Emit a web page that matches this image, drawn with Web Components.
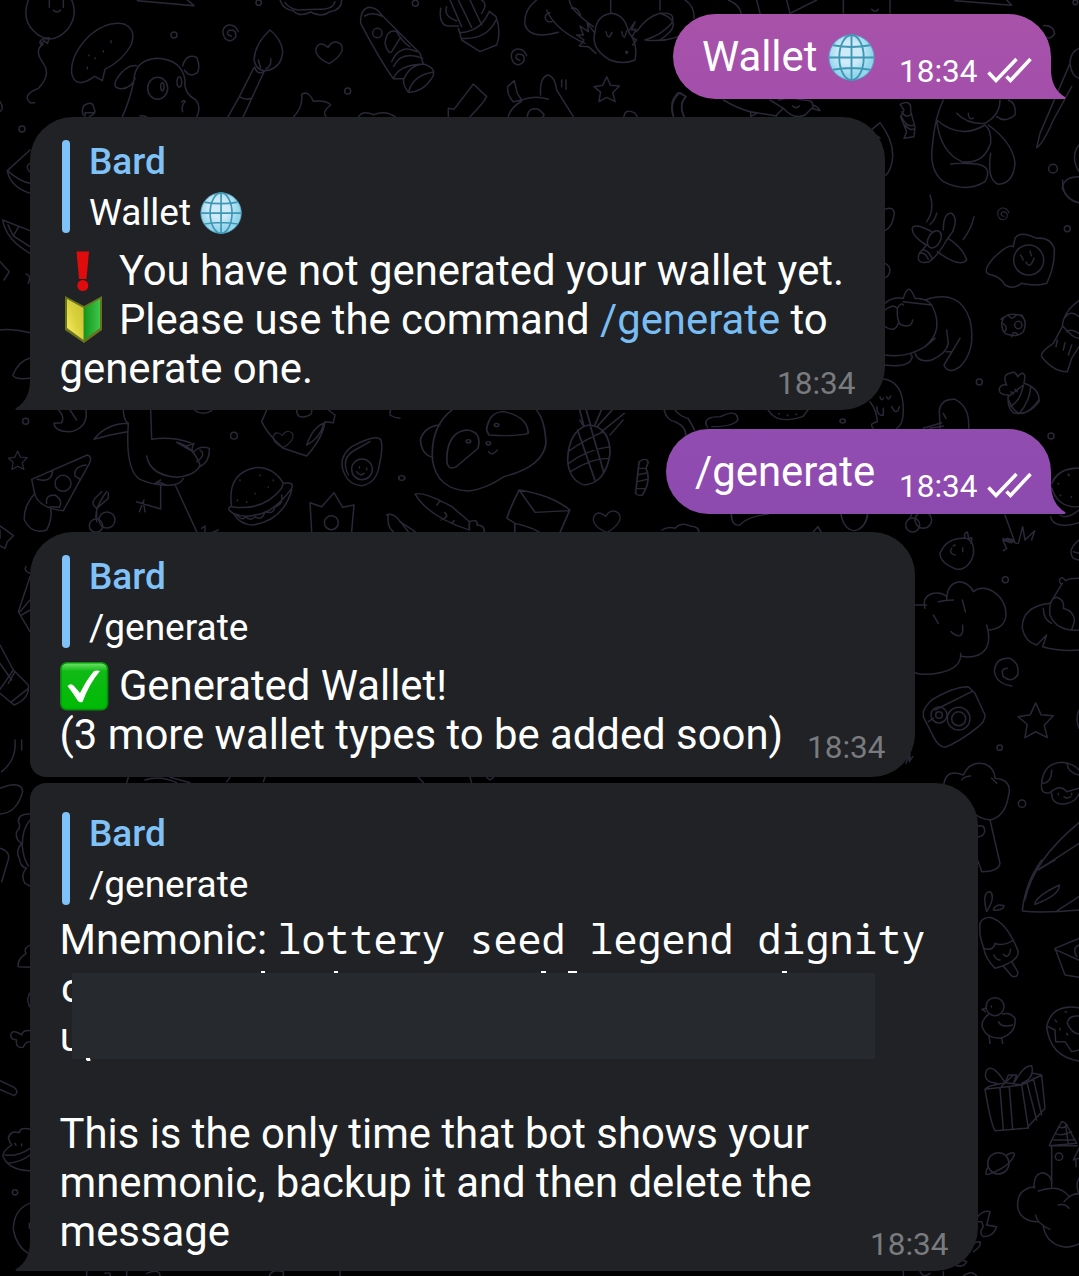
<!DOCTYPE html>
<html lang="en">
<head>
<meta charset="utf-8">
<title>Chat</title>
<style>
html,body{margin:0;height:100%;background:#000;overflow:hidden}
</style>
</head>
<body>
<chat-screen>
  <chat-bubble out style="--w:378px;--h:84.5px;--fill:linear-gradient(#a852a9,#a34fab);--tail:#a34fab;margin-top:14px">
    <text-line>Wallet <emoji-icon name="globe" style="--s:48px"></emoji-icon></text-line>
    <time-stamp slot="time" read>18:34</time-stamp>
  </chat-bubble>
  <chat-bubble tail style="--w:855px;--h:293px;--tb:15px;margin-top:18.5px">
    <reply-quote name="Bard">Wallet <emoji-icon name="globe" style="--s:43px"></emoji-icon></reply-quote>
    <text-line><emoji-icon name="bang" style="--s:49px"></emoji-icon> You have not generated your wallet yet.</text-line>
    <text-line><emoji-icon name="leaf" style="--s:49px"></emoji-icon> Please use the command <cmd-link>/generate</cmd-link> to</text-line>
    <text-line>generate one.</text-line>
    <time-stamp slot="time">18:34</time-stamp>
  </chat-bubble>
  <chat-bubble out style="--w:385px;--h:84.5px;--fill:linear-gradient(#914cb0,#8d4aae);--tail:#8d4aae;margin-top:19px">
    <text-line>/generate</text-line>
    <time-stamp slot="time" read>18:34</time-stamp>
  </chat-bubble>
  <chat-bubble style="--w:885px;--h:244.5px;--bl:16px;--tb:17.5px;margin-top:18.5px">
    <reply-quote name="Bard">/generate</reply-quote>
    <text-line><emoji-icon name="check" style="--s:49px"></emoji-icon> Generated Wallet!</text-line>
    <text-line>(3 more wallet types to be added soon)</text-line>
    <time-stamp slot="time">18:34</time-stamp>
  </chat-bubble>
  <chat-bubble tail style="--w:948px;--h:487.5px;--tl:16px;--pt:29px;--tb:14.5px;margin-top:6.5px">
    <reply-quote name="Bard" style="--gap:10px">/generate</reply-quote>
    <redacted-block>
      <text-line style="--lh:48px">Mnemonic: <mono-text>lottery seed legend dignity</mono-text></text-line>
      <text-line><mono-text>c</mono-text></text-line>
      <text-line><mono-text>up</mono-text></text-line>
    </redacted-block>
    <text-line style="--lh:47.2px"></text-line>
    <text-line>This is the only time that bot shows your</text-line>
    <text-line>mnemonic, backup it and then delete the</text-line>
    <text-line>message</text-line>
    <time-stamp slot="time">18:34</time-stamp>
  </chat-bubble>
</chat-screen>

<script>
const define = (tag, html, setup) => customElements.define(tag, class extends HTMLElement {
  constructor() {
    super();
    this.attachShadow({mode: 'open'}).innerHTML = html.trim();
  }
  connectedCallback() { if (setup) setup(this, this.shadowRoot); }
});

define('chat-screen', `
<style>
:host{display:block;position:relative;width:1079px;height:1276px;overflow:hidden;background:#000;color:#fff;font-family:Roboto,sans-serif}
main{position:relative;display:flex;flex-direction:column;width:1021px;padding-left:30px}
</style>
<doodle-wallpaper></doodle-wallpaper>
<main><slot></slot></main>`);

define('chat-bubble', `
<style>
:host{display:block;position:relative;box-sizing:border-box;flex:none;width:var(--w);height:var(--h);align-self:flex-start;
 --r:43px;background:var(--fill,#202225);border-radius:var(--tl,var(--r)) var(--r) var(--r) var(--bl,var(--r))}
:host([tail]){border-bottom-left-radius:0}
:host([out]){align-self:flex-end;border-bottom-right-radius:0}
.grid{display:grid;height:100%}
.body,.time{grid-area:1/1}
.body{padding:var(--pt,23px) 0 0 29.5px}
.time{place-self:end;padding:0 29.5px var(--tb,16px) 0}
:host([out]) .grid{display:flex;justify-content:space-between}
:host([out]) .body{padding:18px 0 0 29px}
:host([out]) .time{align-self:flex-end;padding:0 19px 15.5px 0}
svg{position:absolute;bottom:0;width:15px;height:30px;display:none}
:host([tail]) .l{display:block;left:-15px;color:#202225}
:host([out]) .r{display:block;right:-14.5px;color:var(--tail)}
</style>
<svg class="l" viewBox="0 0 15 30"><path fill="currentColor" d="M15.5 0V30H1.500Q-.5 29 1 28Q15 20 15 0Z"/></svg>
<svg class="r" viewBox="0 0 15 30"><path fill="currentColor" d="M-.5 0V30H13.500Q15.500 29 14 28Q0 20 0 0Z"/></svg>
<div class="grid"><div class="body"><slot></slot></div><div class="time"><slot name="time"></slot></div></div>`);

define('text-line', `
<style>
:host{display:block;height:var(--lh,49.2px);line-height:49.2px;font-size:41.83px;white-space:pre}
</style><slot></slot>`);

define('mono-text', `
<style>:host{display:inline;font:40px/1 "Noto Sans Mono","Liberation Mono",monospace}</style><slot></slot>`);

define('cmd-link', `
<style>:host{display:inline;color:#79bdf3}</style><slot></slot>`);

define('reply-quote', `
<style>
:host{display:flex;gap:19px;height:93px;padding-left:2.5px;margin-bottom:var(--gap,13px);font-size:37px;white-space:pre}
i{width:8px;border-radius:4px;background:#80c1f7}
div{display:flex;flex-direction:column}
b,span{height:47px}
b{line-height:43px;font-weight:500;color:#80c1f7}
span{line-height:53px}
</style><i></i><div><b></b><span><slot></slot></span></div>`,
(el, root) => root.querySelector('b').textContent = el.getAttribute('name'));

define('time-stamp', `
<style>
:host{display:flex;align-items:flex-end;gap:9.5px;height:24px;line-height:24px;font-size:31.5px;color:#797b7e}
:host([read]){color:#fff}
span{margin-bottom:-1px}
svg{display:none;width:45px;height:26px}
:host([read]) svg{display:block}
</style><span><slot></slot></span>
<svg viewBox="0 0 45 26"><path fill="none" stroke="#fff" stroke-width="3.500" d="M1.500 15.500L9 23.500L29.500 2M19.500 19.500L23.500 23.500L43.500 2"/></svg>`);

define('redacted-block', `
<style>
:host{display:block;position:relative}
.cover{position:absolute;left:12.5px;top:58px;width:803px;height:86px;background:#26292d}
.tip{position:absolute;top:55.500px;height:2px;background:#fff}
</style><slot></slot><div class="cover"></div>
<div class="tip" style="left:201px;width:4px"></div><div class="tip" style="left:274px;width:4px"></div>
<div class="tip" style="left:481px;width:5px"></div><div class="tip" style="left:508px;width:9px"></div>
<div class="tip" style="left:722px;width:5px"></div><div class="tip" style="left:26.500px;top:143px;width:4px"></div>`);

const EMOJI = {
  globe: `<defs><radialGradient id="g" cx=".45" cy=".4"><stop offset=".5" stop-color="#cfeaf8"/><stop offset="1" stop-color="#93d6ec"/></radialGradient></defs>
<circle cx="24" cy="24" r="23" fill="url(#g)" stroke="#5aa7cc" stroke-width="1"/>
<g fill="none" stroke="#3f97b4" stroke-width="1.900"><path d="M24 1V47M1 24H47M5 11.500Q24 15 43 11.500M5 36.500Q24 33 43 36.500"/><ellipse cx="24" cy="24" rx="12.500" ry="23"/></g>`,
  bang: `<path fill="#e00b0d" d="M16.500 4.500H29L26.500 32H19Z"/><circle cx="22.800" cy="38.500" r="5.500" fill="#e00b0d"/>`,
  leaf: `<defs><linearGradient id="y" x1="0" y1="1" x2="1" y2="0"><stop stop-color="#fff06a"/><stop offset=".5" stop-color="#d9d23c"/><stop offset="1" stop-color="#c6c232"/></linearGradient><linearGradient id="n"><stop stop-color="#12951b"/><stop offset="1" stop-color="#40c64b"/></linearGradient></defs>
<path fill="#68731e" d="M5 0L24 10L42 0V34L24 47L5 34Z"/><path fill="url(#y)" d="M7 3L23.500 12V44L7 32Z"/><path fill="url(#n)" d="M24 12L40 3V32L24 44Z"/>`,
  check: `<defs><linearGradient id="k" x2="0" y2="1"><stop stop-color="#72e36a"/><stop offset=".18" stop-color="#10ba15"/><stop offset="1" stop-color="#00ba05"/></linearGradient></defs>
<rect x=".8" y=".8" width="46.800" height="46.800" rx="6" fill="url(#k)" stroke="#078f0b" stroke-width="1.600"/><path fill="#fff" d="M7.500 24Q11 20.500 14 24L20 31Q27 17 34 9Q37 8 40 9Q29 22 22.500 40Q20 41 18 39Q13 31 7.500 24Z"/>`
};
define('emoji-icon', `
<style>:host{display:inline-block;width:var(--s);height:var(--s);vertical-align:-.27em;line-height:0;margin-top:-8px;margin-bottom:-8px}svg{width:100%;height:100%;overflow:visible}</style><svg viewBox="0 0 49 49"></svg>`,
(el, root) => root.querySelector('svg').innerHTML = EMOJI[el.getAttribute('name')]);

define('doodle-wallpaper', `
<style>:host{position:absolute;inset:0;display:block}svg{display:block}</style>
<svg width="1079" height="1276" fill="none" stroke="#2a2836" stroke-linecap="round" stroke-linejoin="round" stroke-width="4.500">
<defs>
<path id="star" d="M0-32L10-10L33-8L16 10L22 33L0 22L-20 33L-16 8L-33-6L-10-10Z"/>
<path id="heart" d="M0 33Q-44 14-40-12Q-30-38-4-16Q12-42 34-26Q52 0 0 33Z"/>
<path id="swirl" d="M5 6Q-14 0-2-12Q22-16 18 8Q4 28-14 12Q-30-18-4-28Q18-30 26-8"/>
</defs>
<g transform="scale(.33333)">
<path d="M85 0Q65 55 98 90Q150 145 203 88Q235 45 215 0M148 0V22M190 0V22M160 30Q170 42 182 30M148 113Q112 118 122 132L132 122L142 130Q150 118 138 113M130 132Q100 150 130 190Q155 225 115 265Q65 285 90 308H104"/>
<path d="M412 2L582 17L562 0M215 220Q210 165 270 105Q325 60 375 73Q410 90 393 135Q370 180 315 208L307 242L284 229Q226 270 215 220Z"/>
<path d="M267 165V167M333 122V128M310 152V156M285 173V176M262 202V206M249 345Q242 318 260 312Q280 304 282 325Q292 340 268 350M255 350V338H284"/>
<path d="M367 350Q390 300 402 240Q405 180 470 175Q545 178 555 240Q550 280 587 299Q605 320 590 352M410 197Q380 192 350 237Q335 265 365 266Q395 265 405 235M548 198Q558 160 590 172Q602 200 592 218Q570 235 553 210M545 306Q550 299 556 304Q542 318 548 335M420 348Q430 345 440 351"/><ellipse cx="473" cy="265" rx="30" ry="33"/><ellipse cx="487" cy="260" rx="5" ry="12"/><ellipse cx="538" cy="246" rx="7" ry="15"/>
<path d="M810 90Q765 130 762 180Q770 218 805 211Q845 200 848 155Q845 118 810 90ZM762 203L718 290L683 352M793 213L755 295L729 352M764 202Q772 227 793 214M718 290Q735 302 755 295M775 180L782 204M812 176Q815 198 798 207"/>
<use href="#swirl" x="689" y="103"/><use href="#heart" x="988" y="158"/><circle cx="522" cy="105" r="9"/><circle cx="1043" cy="273" r="9"/><circle cx="66" cy="387" r="9"/><circle cx="1246" cy="10" r="9"/><circle cx="776" cy="8" r="8"/>
<path d="M840 0Q850 30 880 32Q898 53 932 36Q965 55 990 35Q1025 30 1025 0M855 8Q870 28 895 30Q930 28 960 28Q1000 28 1005 5M880 352Q910 320 905 283Q925 270 940 304Q980 300 992 315Q965 335 978 350M1076 350Q1088 330 1120 344Q1160 328 1190 354"/>
<path d="M1082 70Q1080 30 1105 22Q1130 22 1145 45L1260 160L1270 192Q1315 205 1295 235Q1270 275 1225 277Q1205 250 1212 236L1180 236Q1140 180 1082 70ZM1094 48Q1115 35 1145 48M1155 130Q1160 85 1190 95Q1210 130 1230 140M1155 130Q1165 165 1175 155L1200 115M1175 185Q1200 130 1250 155M1180 200Q1205 150 1268 175M1180 236Q1195 195 1270 192M1212 236Q1230 195 1270 192M1225 277Q1240 225 1298 217"/><circle cx="1132" cy="99" r="14"/>
<path d="M0 305Q14 325 0 334M90 450L22 512Q30 560 90 580M22 512Q60 545 90 550M90 490Q75 498 88 515M8 660L90 692M8 660Q18 720 90 760M24 675L40 708L56 680M40 708L90 740M0 785L28 815L12 840M78 822Q95 825 85 850M0 990Q30 985 90 998M90 1075Q60 1080 38 1125Q45 1140 90 1135"/>
</g>
<g transform="translate(380) scale(.33333)">
<path d="M210 0L245 80M235 0L275 82M270 0L305 75M182 25Q175 80 210 78H235M200 20Q190 50 230 62M305 0Q325 10 305 40M235 85L245 120L300 155L350 135Q365 95 348 50L328 34L320 50Q295 95 240 98ZM245 115Q320 120 348 60"/>
<use href="#swirl" x="414" y="175"/><use href="#star" transform="translate(680 267) scale(1.150)" stroke-width="4"/>
<path d="M470 0Q430 30 435 75Q450 120 535 97M568 0Q570 30 640 80M500 30Q525 90 615 130M510 38C490 40 490 70 516 65M575 25Q595 20 603 52M692 0V38M645 95Q650 45 695 40Q735 45 745 95Q775 130 765 180Q730 195 690 180Q630 145 645 95ZM645 100L622 70L625 95L600 78L610 105L590 105L612 120L598 138L625 140L648 160M745 95L765 65L755 90L768 88L756 112L770 120L758 135M678 95Q684 125 696 97M725 95Q733 130 739 93M770 95Q800 50 840 40Q890 35 875 70Q845 105 795 120Q880 130 940 85M915 0Q945 20 942 55M840 0V30"/><circle cx="740" cy="157" r="3"/>
<path d="M205 350V325L222 328L280 252L320 290Q310 310 270 350M385 350Q390 325 425 303M383 260L403 242L412 280L425 300L400 305Q380 285 383 260ZM425 300Q465 285 505 298M482 285Q478 230 505 225Q525 230 530 270L580 350M442 350Q445 320 475 328Q500 345 488 350M545 240V260M558 240V268M880 350Q865 305 895 278L918 290Q895 310 912 350M732 350Q735 325 763 338L772 350"/>
</g>
<g transform="translate(660) scale(.33333)">
<path d="M0 40Q60 60 30 95Q15 110 0 120M205 0Q240 15 243 40M290 0L300 40M380 0L390 40L470 0M550 0V40M690 0V40M635 28Q645 40 655 28M885 2L1055 16L1040 0M1150 77Q1180 75 1184 100Q1170 125 1150 105M1257 145Q1230 155 1230 190L1140 400L1130 443Q1150 430 1180 360L1235 260M1230 190Q1235 230 1257 235M1257 435Q1230 470 1257 515M1257 530Q1210 530 1207 565Q1225 605 1257 608"/>
<path d="M40 345Q28 305 60 278L78 290Q55 315 72 350M190 300Q240 330 290 340L272 350V335L350 348M330 300L370 325L350 345M355 300Q390 290 430 300Q460 300 458 315Q475 320 480 332L455 325M370 325Q400 360 435 345L460 320M398 318Q408 328 418 318M636 388L660 368Q700 420 698 470Q695 510 677 526M660 415Q645 400 652 418"/>
<path d="M720 313Q745 300 752 318V335L765 380L762 410L732 415L740 395L722 350L732 330ZM725 335Q740 360 755 340M724 350Q740 385 762 375M735 375Q750 395 765 385"/>
<path d="M850 300Q825 350 818 430Q805 510 850 545Q920 580 975 545Q1000 500 950 492Q900 488 872 492M830 360Q840 455 905 485Q970 495 992 430Q995 390 975 375Q900 420 830 360M985 375Q1060 430 1065 490Q1060 550 1015 553Q980 540 992 460M890 340Q925 375 975 370Q1020 345 1020 300M925 340Q925 360 940 355M1045 300Q1070 310 1065 345Q1035 370 1010 350"/><circle cx="1179" cy="506" r="13"/><circle cx="1246" cy="7" r="7"/>
</g>
<g transform="translate(860 180) scale(.33333)">
<path d="M608 0Q605 55 657 68M210 45Q225 90 200 125M230 100Q225 120 210 133M342 110Q335 145 310 178M75 88Q100 78 103 100Q98 140 75 152M75 250Q95 260 88 280Q83 292 75 293"/>
<path d="M198 195Q150 165 158 142Q170 130 215 155M250 150Q250 98 275 100Q295 115 278 155L260 180Q235 225 208 245Q165 255 178 220L200 195M265 175Q310 205 320 240Q300 265 232 215M178 220Q195 215 205 238M190 210Q205 210 216 235"/><ellipse cx="223" cy="178" rx="18" ry="28" transform="rotate(30 223 178)"/>
<use href="#swirl" transform="translate(428 105) scale(.75)"/>
<path d="M460 200Q445 190 400 235Q360 280 395 285Q420 290 435 315Q460 330 485 310Q530 320 560 310Q585 260 583 205Q570 170 530 175Q480 150 465 175ZM482 225L490 240M510 213L514 227M498 246Q510 270 522 235"/><circle cx="506" cy="240" r="45"/><circle cx="622" cy="146" r="9"/>
<path d="M75 370Q95 350 130 355Q145 300 165 355Q200 355 215 375L130 365M195 360Q300 325 330 420Q350 510 300 560Q265 585 252 555L300 475M215 375Q255 450 195 500Q140 535 75 525M75 555Q150 565 157 530L150 520M165 520Q175 550 215 540Q260 520 265 490L260 450M258 515H275M195 500L225 475M75 390Q100 370 112 385Q125 365 130 375M112 385Q110 430 125 435Q155 445 158 420M75 440Q105 460 115 430"/>
<path d="M430 415Q445 398 480 405Q505 420 490 455Q470 475 435 460Q418 440 430 415ZM445 405Q455 425 468 405M428 430Q445 440 435 455M455 470Q460 448 475 465M423 418L430 412M485 405L490 412"/><circle cx="475" cy="435" r="11"/>
<path d="M657 362Q610 395 607 440L580 490Q540 515 545 530Q580 575 622 575L635 535L657 500M610 420Q630 385 657 410M610 440Q640 475 657 475M620 455Q635 445 657 460M592 480L588 500M615 488L610 510M635 495L625 525"/>
<path d="M440 615Q425 585 450 580Q465 570 473 590Q490 570 495 590L492 610Q540 625 537 665Q500 710 460 698Q440 680 445 645Q415 645 418 625Q425 612 440 615ZM445 650L490 615M450 680Q480 665 490 617M480 698Q510 660 512 622M453 635L460 642M465 628L472 635"/><circle cx="358" cy="606" r="9"/><circle cx="573" cy="768" r="9"/>
<path d="M70 597Q130 605 130 690Q130 735 110 745M30 665Q50 690 52 725Q25 730 40 745M60 650Q63 665 70 655M80 650Q85 665 92 648M50 680Q52 710 70 705V685M95 680Q110 710 118 680M240 745L238 690Q245 655 285 658Q330 680 326 745M250 700L258 715M190 745L245 728M210 745L250 738M580 900Q600 865 657 865M625 882V884"/>
</g>
<g transform="translate(400 400) scale(.4331 .33333)" stroke-width="4">
<path d="M120 30Q70 80 75 180Q85 270 160 273Q200 265 240 230Q330 200 337 130Q335 60 315 30M92 75Q55 80 47 120Q50 165 76 172M108 175Q110 95 155 90Q190 95 180 145L130 200Q108 215 108 175ZM200 90Q205 35 240 35Q295 50 296 100Q270 110 205 105ZM205 155Q212 170 225 150"/><circle cx="158" cy="124" r="5"/><circle cx="223" cy="75" r="5"/><circle cx="204" cy="130" r="5"/>
<path d="M435 75Q485 80 485 160Q475 250 425 255Q390 240 387 180Q390 90 435 75ZM415 30L425 80L415 60M430 30L440 75M465 30L450 75M490 30L455 80M518 40L465 95M515 60L485 105M410 90L450 240M440 80L470 215M390 190Q430 150 485 140M388 155Q425 120 470 95M393 215Q440 175 482 175"/>
<path d="M552 185Q570 170 573 188L568 205Q578 230 568 265L560 285Q540 290 545 268ZM552 205H568M548 225L572 218M548 245L570 238M545 266H568M610 30Q615 60 635 65Q660 80 660 105M635 30Q645 48 665 55Q675 75 680 90M710 82Q695 50 740 50Q780 25 780 60Q770 80 720 80M850 30Q870 75 930 50L942 30M875 40V42M895 45V47M915 42V44M1405 0Q1430 80 1475 0"/><circle cx="1022" cy="63" r="6"/><circle cx="4" cy="234" r="7"/>
<path d="M160 390Q65 350 35 282Q55 275 120 320L160 365ZM85 315L92 303M95 360Q115 350 103 337M120 370L125 362M160 365Q180 355 178 375Q195 375 195 395M275 270Q350 285 392 330L370 395M275 270Q255 320 247 355L265 370V395M275 270L312 337L392 332M265 370Q300 380 320 395M0 365L35 395"/><use href="#heart" transform="translate(478 365) scale(.78 1)"/>
<path d="M605 390Q620 378 635 385Q650 365 670 378Q690 380 690 395M765 340Q765 380 785 375Q800 350 850 342M1018 342Q1025 390 1050 392Q1075 385 1080 342M955 395L965 380L972 395M1505 250Q1525 200 1568 205M1505 265Q1520 325 1568 320M1520 250V252M1545 225V227M1550 290V292M1525 285V287"/>
</g>
<g transform="translate(0 400) scale(.33333)">
<path d="M175 30Q195 50 185 68L162 70Q165 95 210 95Q265 85 258 30M210 30L230 60M585 32Q610 48 635 32M370 30Q370 60 385 70Q320 70 282 118Q325 105 382 95M385 70Q375 210 420 238Q460 255 490 255Q540 260 550 235M452 30L455 118Q510 108 572 128M440 168Q450 225 530 232Q590 225 600 195Q580 140 530 127L570 150M555 140L582 130Q570 155 582 155Q600 135 628 145Q630 185 600 200M600 150Q620 165 590 185M482 255V327L410 305M432 300L418 335M430 305L435 335M527 258L590 395M482 240L465 250L482 248L497 255M605 385L615 378V395M635 398L655 390"/>
<use href="#star" transform="translate(53 180) scale(.85)"/>
<path d="M95 238L262 165Q278 170 268 190L190 332Q120 325 105 285ZM112 238Q155 250 158 212M258 195Q220 200 225 228L240 238M105 280Q70 320 73 360Q95 405 140 390Q160 350 150 320M140 310Q135 285 165 285Q190 300 178 322L155 320"/><circle cx="189" cy="250" r="24"/>
<path d="M288 355Q285 320 320 275M292 325Q270 315 285 295L305 275M290 365V325L325 295V278"/><circle cx="321" cy="360" r="24"/><circle cx="288" cy="377" r="20"/>
<circle cx="77" cy="64" r="9"/><circle cx="702" cy="107" r="10"/>
<path d="M800 30L785 65Q800 100 850 145L920 168L935 150Q970 105 975 65L1000 68L1005 45L985 30M890 30Q890 55 915 50Q940 45 935 30M920 135Q940 80 972 70Q960 115 920 135Z"/><use href="#heart" transform="translate(850 118) scale(.75)"/>
<path d="M695 320Q680 220 765 203Q820 200 850 250L845 265Q790 335 695 320ZM850 250Q885 245 875 265Q820 340 765 345Q735 355 700 340Q675 325 695 318M710 345Q730 365 735 350Q755 365 765 350Q785 365 795 335Q820 345 825 320Q850 315 845 285M700 340Q720 375 760 375Q850 360 875 270M720 240V242M780 225V227M765 280V282M805 260V262M740 305V307M820 240V242M712 300V302"/>
<path d="M1035 225Q1010 175 1055 140Q1130 100 1143 120Q1150 145 1138 195Q1130 250 1085 257Q1050 255 1035 225ZM1045 225Q1020 175 1065 150L1110 125M1070 215Q1080 230 1092 220M1078 200V204M1100 205V209"/><circle cx="1086" cy="208" r="31"/>
<path d="M935 395L930 308L965 320L1002 278L1028 322L1062 315L1055 395M1160 345Q1180 335 1205 370L1225 395M1165 345Q1160 380 1180 395M1197 0Q1165 30 1170 45Q1185 55 1200 54"/><circle cx="994" cy="368" r="21"/>
<path d="M0 378L15 388L40 407L22 425L15 445L0 438M0 390V415M78 500Q70 512 90 520M90 530L55 635L90 695M60 635L90 600M65 645L90 630M0 735L40 810L85 855Q90 895 42 915L0 880M0 790L35 840M0 868L40 810M25 850L45 815M85 865L35 905"/>
</g>
<g transform="translate(860 500) scale(.33333)">
<path d="M0 85Q20 70 22 45M150 55L155 42M435 45L465 128M430 152L440 145L428 120L455 128L430 115M470 130L440 115L460 120M475 130L488 80L495 120L524 92L515 120M572 50Q580 90 657 68M600 45Q620 60 657 30M657 120Q620 150 640 175L657 180M640 155L657 160"/><circle cx="158" cy="75" r="21"/><circle cx="190" cy="60" r="25"/>
<path d="M240 160Q260 110 320 115Q345 125 340 165Q325 210 290 208Q240 190 240 160ZM315 115Q310 98 322 96L327 118Q340 105 333 130M275 145Q265 160 285 165M285 135L280 138M308 143V155"/>
<path d="M163 315H200M195 325Q185 290 220 280Q245 275 260 290M235 305Q255 300 280 300M260 298Q262 248 300 245Q330 250 340 275Q365 255 400 275Q438 300 438 345Q435 385 388 390M380 375Q400 445 355 465Q330 475 302 468M302 460Q305 505 240 518Q195 528 163 518M220 345L235 370M307 300L316 335M273 395Q300 420 308 395V375"/>
<path d="M657 235Q625 235 617 242Q605 225 598 240Q600 255 607 250L570 310Q485 320 487 385Q495 425 530 435L560 405L548 440Q600 455 657 450M570 345Q565 295 590 292Q615 300 610 325Q645 335 643 365Q635 390 635 388M550 325Q550 360 575 370M570 345Q590 395 657 390"/>
<path d="M455 558Q405 550 403 510Q410 470 450 475Q480 490 473 525Q455 550 430 530Q420 505 442 505"/>
<path d="M190 635Q195 620 215 600Q280 560 325 560L345 580L375 645Q375 665 355 680Q300 725 255 742Q235 740 220 710L190 650ZM225 630L335 575M205 665L220 655"/><circle cx="237" cy="645" r="24"/><circle cx="237" cy="645" r="10"/><circle cx="296" cy="656" r="34"/><circle cx="296" cy="656" r="21"/>
<use href="#star" transform="translate(527 660) scale(1.600)" stroke-width="2.800"/><circle cx="436" cy="239" r="9"/><circle cx="419" cy="743" r="8"/><circle cx="486" cy="911" r="11"/>
<path d="M657 630Q645 655 657 685M138 790L150 760L148 785L158 770M252 850Q260 805 310 825Q330 780 375 792Q405 805 405 835Q460 840 445 890Q435 950 390 960Q360 955 350 945M305 840Q310 830 332 828M395 835L410 850M350 980Q375 970 374 995Q370 1010 355 1010M390 960L420 1090Q415 1115 365 1115L353 1080"/>
<path d="M545 850Q550 790 605 787Q640 790 657 810M545 850Q540 885 570 878Q600 850 620 875L657 865M545 850Q575 850 575 810M622 790Q620 815 657 825M575 880Q575 915 615 912Q650 905 657 880M595 880V884M635 880V884M612 890Q620 898 632 890M657 968Q520 1080 495 1200M535 1110L657 1030"/>
</g>
<g transform="translate(860 860) scale(.33333)">
<path d="M545 0Q495 70 487 153Q550 160 657 150M535 28L585 0M525 133Q525 110 598 75Q600 105 525 133ZM592 152L657 110M380 155Q365 95 390 95Q408 110 380 155ZM400 150Q405 130 432 137Q430 153 400 150Z"/>
<path d="M360 205Q355 175 390 172Q440 185 475 275Q475 305 405 325Q375 295 370 260Q358 230 360 205ZM370 265Q400 275 405 250Q430 260 460 240M430 318L455 348Q475 355 473 335L455 305M402 285Q408 300 420 300M430 283Q445 300 452 268"/>
<path d="M657 235L585 265L615 345L657 352M585 268L657 300M657 255Q635 265 650 290"/>
<circle cx="405" cy="440" r="27"/><path d="M378 445L366 448L376 455M385 463Q360 485 368 505Q380 535 420 535Q470 520 465 475Q450 455 428 462M415 485Q425 505 457 495M387 530L390 550M425 535L428 550M394 438V441"/>
<path d="M657 443Q575 430 560 500Q570 590 657 603M657 468Q625 465 622 490Q635 520 657 522M565 500L585 510L587 545L615 545L635 575L657 570M585 480L590 485M615 455L620 457M600 505V510M620 520L623 525"/>
<path d="M375 688Q385 675 440 668L485 675L545 645L555 745L500 805L405 812Q392 790 375 688ZM375 688L485 675L505 805M420 685L430 810M448 682L458 808M500 665L530 780M520 655L545 765M435 668Q400 610 380 630Q365 665 410 670M465 665Q490 615 515 617Q525 655 485 670M435 670L445 645H470L460 670M425 678L460 645M520 640L545 645"/>
<circle cx="415" cy="910" r="32"/><path d="M440 885Q465 872 463 885Q450 920 385 943Q370 945 385 920"/>
<path d="M568 857L575 840L605 785Q615 785 620 795L650 850ZM568 857H652M585 820Q605 830 635 815M595 800Q610 808 622 795M580 840Q610 840 645 840M617 795L625 855M575 860V980M657 865L640 900L657 895M648 900V920"/><circle cx="597" cy="890" r="11"/>
<path d="M522 985Q520 940 550 938Q575 945 575 970M525 980Q470 985 473 1040Q480 1085 535 1085M535 993Q600 970 627 1010Q640 1000 657 1002M595 1035Q615 1030 627 1045M612 1025Q635 1000 657 1000M527 1065Q530 1090 570 1108M550 1100Q560 1155 620 1162Q640 1160 657 1152M657 955Q645 975 657 1000"/>
<path d="M353 1070Q370 1050 390 1055L380 1095L410 1100Q400 1130 370 1130Q355 1120 370 1100L365 1085H353M340 1175Q365 1160 360 1145Q340 1145 335 1160M285 1215Q300 1195 320 1205Q310 1225 285 1215ZM130 1248V1232M180 1235Q190 1255 210 1240M250 1235V1248M310 1248Q335 1228 350 1248"/>
</g>
<g transform="translate(0 740) scale(.33333)">
<path d="M45 0Q50 60 5 95M65 0V30M0 145Q65 120 68 155Q50 220 0 222M90 222Q55 220 55 245Q65 260 50 275Q45 300 65 310Q45 335 58 355Q60 380 80 385Q60 405 75 430L90 438M90 240Q65 270 67 320Q70 355 85 378M0 325Q35 335 23 365L5 425M88 617Q70 625 78 640Q50 660 55 680L90 682M88 760L83 780L88 800M90 872Q68 870 65 885Q35 865 32 887Q35 900 50 900Q45 925 70 922Q75 905 90 905M380 128L385 112M435 120Q480 105 530 128M510 112L570 128M680 125L690 112M790 125L795 112M1255 112L1270 128M1410 112L1415 128M1460 112L1470 120L1480 112"/>
</g>
<g transform="translate(0 1060) scale(.33333)">
<path d="M0 62L42 82Q60 95 42 107L0 88M90 208Q60 200 58 218Q30 210 25 235Q30 250 35 255Q0 280 12 295Q30 330 90 332M15 285Q55 290 90 265M25 310Q65 305 90 285M45 250L48 256M65 252V258M88 430Q40 450 40 510Q50 560 85 580M88 490V505M260 632V648M315 640Q335 635 330 648M380 632V648M440 640Q480 625 480 648M808 648Q815 625 850 635L850 648M1020 632V648"/><circle cx="45" cy="397" r="8"/>
</g>
</svg>`);
</script>
</body>
</html>
